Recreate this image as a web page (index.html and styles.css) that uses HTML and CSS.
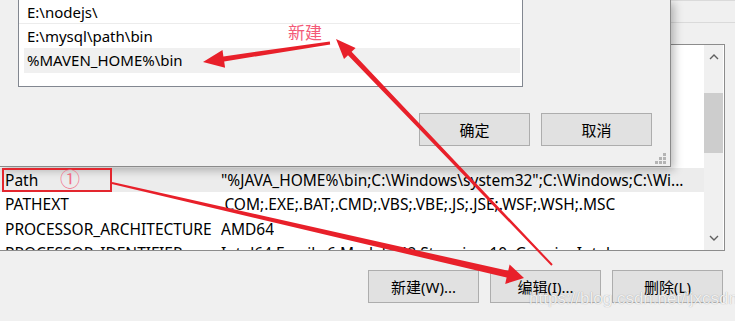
FILE: index.html
```html
<!DOCTYPE html>
<html lang="zh-CN">
  <head>
    <meta charset="UTF-8" />
    <meta name="viewport" content="width=device-width, initial-scale=1.0" />
    <title>编辑环境变量</title>
    <link rel="stylesheet" href="styles.css">
  </head>
  <body>
    <div class="desk">
      <div class="envWin">
        <div class="topStrip"></div>

        <div class="varList">
          <div class="rows">
            <div class="row"><span class="name">DriverData</span><span class="value">C:\Windows\System32\Drivers\DriverData</span></div>
            <div class="row"><span class="name">JAVA_HOME</span><span class="value">C:\Program Files\Java\jdk1.8.0_181</span></div>
            <div class="row"><span class="name">MAVEN_HOME</span><span class="value">E:\apache-maven-3.6.0</span></div>
            <div class="row"><span class="name">NUMBER_OF_PROCESSORS</span><span class="value">8</span></div>
            <div class="row"><span class="name">OS</span><span class="value">Windows_NT</span></div>
            <div class="row selected"><span class="name">Path</span><span class="value">"%JAVA_HOME%\bin;C:\Windows\system32";C:\Windows;C:\Wi...</span></div>
            <div class="row"><span class="name">PATHEXT</span><span class="value">.COM;.EXE;.BAT;.CMD;.VBS;.VBE;.JS;.JSE;.WSF;.WSH;.MSC</span></div>
            <div class="row"><span class="name">PROCESSOR_ARCHITECTURE</span><span class="value">AMD64</span></div>
            <div class="row"><span class="name">PROCESSOR_IDENTIFIER</span><span class="value">Intel64 Family 6 Model 142 Stepping 10, GenuineIntel</span></div>
          </div>
          <div class="scrollbar">
            <div class="arrowBtn">
              <svg width="10" height="6" viewBox="0 0 10 6"><polyline points="1,5 5,1 9,5" fill="none" stroke="#606060" stroke-width="1.4"/></svg>
            </div>
            <div class="track"><div class="thumb"></div></div>
            <div class="arrowBtn">
              <svg width="10" height="6" viewBox="0 0 10 6"><polyline points="1,1 5,5 9,1" fill="none" stroke="#606060" stroke-width="1.4"/></svg>
            </div>
          </div>
        </div>

        <div class="btnRow">
          <button class="btn">新建(W)...</button>
          <button class="btn">编辑(I)...</button>
          <button class="btn">删除(L)</button>
        </div>
      </div>

      <div class="editDlg">
        <div class="pathList">
          <div class="pathItem first">E:\nodejs\</div>
          <div class="pathItem">E:\mysql\path\bin</div>
          <div class="pathItem current">%MAVEN_HOME%\bin</div>
        </div>
        <div class="dlgActions">
          <button class="btn">确定</button>
          <button class="btn">取消</button>
        </div>
        <svg class="grip" width="12" height="12" viewBox="0 0 12 12">
          <rect x="8" y="0" width="3" height="3" fill="#b4b4b4"/>
          <rect x="4" y="4" width="3" height="3" fill="#b4b4b4"/>
          <rect x="8" y="4" width="3" height="3" fill="#b4b4b4"/>
          <rect x="0" y="8" width="3" height="3" fill="#b4b4b4"/>
          <rect x="4" y="8" width="3" height="3" fill="#b4b4b4"/>
          <rect x="8" y="8" width="3" height="3" fill="#b4b4b4"/>
        </svg>
      </div>

      <!-- annotations drawn over the screenshot -->
      <svg class="marks" width="735" height="321" viewBox="0 0 735 321">
        <rect x="3" y="169" width="108" height="22" fill="none" stroke="#e3262e" stroke-width="2"/>
        <text x="60" y="187" class="circleNum">①</text>
        <text x="288" y="39" class="newLabel">新建</text>
        <polygon fill="#e8202a" points="329.8,41.5 223.4,56.4 222.5,50.0 203,62 225.1,67.8 224.2,61.4 330.2,44.5"/>
        <polygon fill="#e8202a" points="552.7,264.3 351.6,51.8 355.6,48.0 336,39 344.0,59.0 348.0,55.2 551.3,265.7"/>
        <polygon fill="#e8202a" points="112.2,182.0 508.2,270.8 509.6,264.5 524,278 505.2,283.9 506.6,277.6 111.8,184.0"/>
      </svg>

      <div class="watermark">https://blog.csdn.net/ljxcsdn</div>
    </div>
  </body>
</html>
```

FILE: styles.css
```css
* {
  margin: 0;
  padding: 0;
  box-sizing: border-box;
}

body {
  background: #f0f0f0;
  font-family: "Noto Sans", "Noto Sans CJK SC", sans-serif;
  font-size: 15px;
  color: #000;
}

.desk {
  position: relative;
  width: 735px;
  height: 321px;
  overflow: hidden;
}

.topStrip {
  height: 23px;
  border-top: 1px solid #dadada;
  border-bottom: 1px solid #dadada;
  margin-bottom: 21px;
}

.varList {
  display: flex;
  width: 727px;
  height: 207px;
  margin-left: -2px;
  background: #fff;
  border: 1px solid #8c8c8c;
}

.rows {
  flex: 1;
  overflow: hidden;
}

.row {
  display: flex;
  height: 24.5px;
  line-height: 24.5px;
  padding-left: 6px;
  font-size: 15.5px;
  white-space: nowrap;
}

.row.selected {
  background: #ececec;
}

.name {
  width: 216px;
  flex-shrink: 0;
}

.value {
  overflow: hidden;
}

.scrollbar {
  display: flex;
  flex-direction: column;
  width: 19px;
  margin-right: 1px;
  background: #f0f0f0;
}

.arrowBtn {
  display: flex;
  justify-content: center;
  align-items: center;
  height: 24px;
}

.track {
  flex: 1;
}

.thumb {
  height: 60px;
  margin-top: 24px;
  background: #cdcdcd;
}

.btnRow {
  display: flex;
  justify-content: flex-end;
  gap: 11px;
  padding-right: 12px;
  margin-top: 19px;
}

.btn {
  width: 111px;
  height: 33px;
  background: #e1e1e1;
  border: 1px solid #adadad;
  font-family: "Noto Sans", "Noto Sans CJK SC", sans-serif;
  font-size: 15px;
  color: #000;
}

.editDlg {
  position: absolute;
  left: 0;
  top: 0;
  width: 671px;
  height: 167px;
  background: #f0f0f0;
  border-right: 1px solid #8a8a8a;
  border-bottom: 1px solid #8a8a8a;
  box-shadow: 3px 3px 9px rgba(0, 0, 0, 0.28);
}

.pathList {
  width: 505px;
  margin-left: 18px;
  padding: 0 2px 13px 5px;
  background: #fff;
  border: 1px solid #828790;
  border-top: none;
}

.pathItem {
  height: 24px;
  line-height: 24px;
  padding-left: 3px;
}

.pathItem.first {
  margin-left: -5px;
  padding-left: 8px;
  border-bottom: 1px solid #ececec;
}

.pathItem.current {
  background: #f0f0f0;
  height: 25px;
}

.dlgActions {
  display: flex;
  justify-content: flex-end;
  gap: 11px;
  padding-right: 18px;
  margin-top: 26px;
}

.grip {
  position: absolute;
  right: 3px;
  bottom: 1px;
}

.marks {
  position: absolute;
  left: 0;
  top: 0;
  pointer-events: none;
}

.circleNum {
  font-family: "Noto Sans CJK SC", sans-serif;
  font-size: 20px;
  fill: #f0708a;
}

.newLabel {
  font-family: "Noto Sans CJK SC", sans-serif;
  font-size: 17px;
  fill: #f35a78;
}

.watermark {
  position: absolute;
  left: 529px;
  top: 289px;
  font-family: "Liberation Sans", sans-serif;
  font-size: 17px;
  color: rgba(255, 255, 255, 0.85);
  text-shadow: 0 0 1px rgba(0, 0, 0, 0.35);
}
```
